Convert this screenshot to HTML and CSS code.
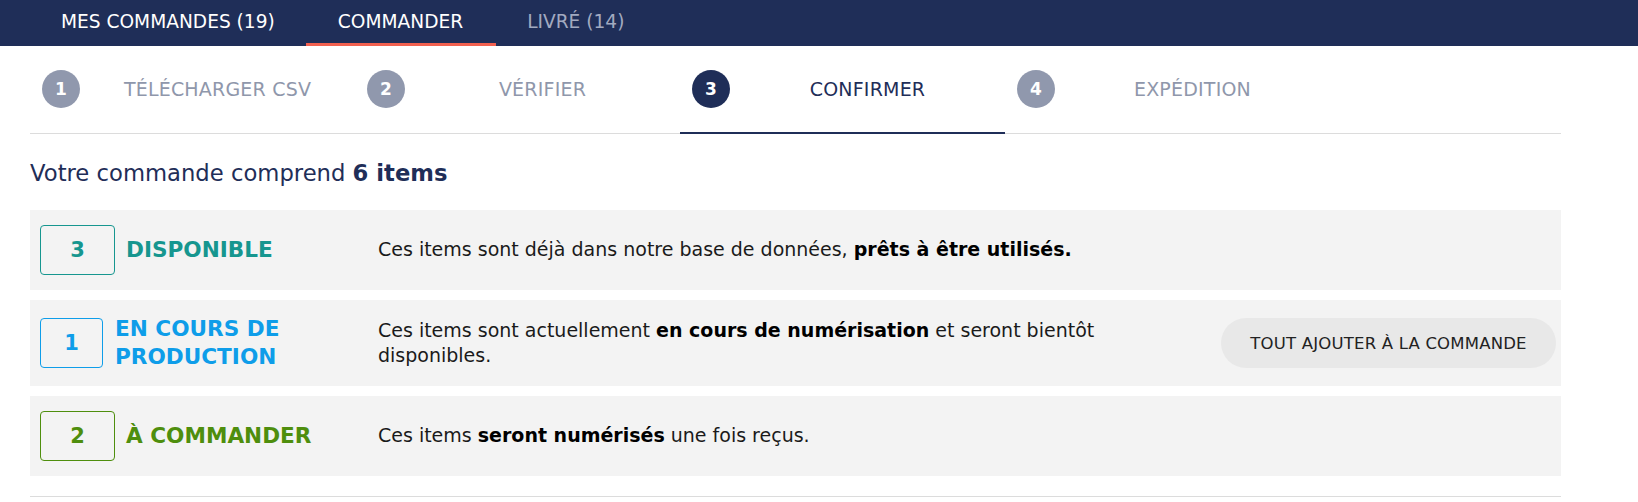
FILE: index.html
```html
<!DOCTYPE html>
<html lang="fr">
<head>
<meta charset="utf-8">
<title>Commander</title>
<link rel="stylesheet" href="styles.css">
</head>
<body>
<nav class="topnav">
  <a class="tab">MES COMMANDES (19)</a>
  <a class="tab tab--active">COMMANDER</a>
  <a class="tab tab--muted">LIVRÉ (14)</a>
</nav>
<main class="page">
  <ol class="stepper">
    <li class="step"><span class="step-num">1</span><span class="step-label">TÉLÉCHARGER CSV</span></li>
    <li class="step"><span class="step-num">2</span><span class="step-label">VÉRIFIER</span></li>
    <li class="step step--active"><span class="step-num">3</span><span class="step-label">CONFIRMER</span></li>
    <li class="step"><span class="step-num">4</span><span class="step-label">EXPÉDITION</span></li>
  </ol>
  <h2 class="summary">Votre commande comprend <strong>6 items</strong></h2>
  <section class="rows">
    <div class="row row--available">
      <div class="status">
        <span class="badge">3</span>
        <span class="status-label">DISPONIBLE</span>
      </div>
      <p class="desc">Ces items sont déjà dans notre base de données, <strong>prêts à être utilisés.</strong></p>
    </div>
    <div class="row row--production">
      <div class="status">
        <span class="badge badge--narrow">1</span>
        <span class="status-label status-label--wrap"><span>EN COURS DE</span> <span>PRODUCTION</span></span>
      </div>
      <p class="desc"><span>Ces items sont actuellement <strong>en cours de numérisation</strong> et seront bientôt</span><br><span>disponibles.</span></p>
      <button class="add-btn">TOUT AJOUTER À LA COMMANDE</button>
    </div>
    <div class="row row--order">
      <div class="status">
        <span class="badge">2</span>
        <span class="status-label">À COMMANDER</span>
      </div>
      <p class="desc">Ces items <strong>seront numérisés</strong> une fois reçus.</p>
    </div>
  </section>
  <div class="rule"></div>
</main>
</body>
</html>
```

FILE: styles.css
```css
* { box-sizing: border-box; }

body {
  margin: 0;
  font-family: "DejaVu Sans", "Noto Sans", sans-serif;
  color: #1a1a1a;
  background: #fff;
}

.topnav {
  display: flex;
  height: 46px;
  background: #1f2e58;
  padding-left: 30px;
}

.tab {
  display: block;
  padding: 0 31px;
  height: 46px;
  line-height: 43px;
  border-bottom: 3px solid transparent;
  color: #fff;
  font-size: 18.6px;
}

.tab--active {
  border-bottom-color: #f2604f;
  padding: 0 33px 0 32px;
}
.tab--muted { color: #a2aac0; }

.page {
  padding: 0 77px 0 30px;
}

.stepper {
  list-style: none;
  margin: 0;
  padding: 0;
  display: flex;
  border-bottom: 1px solid #dcdcdc;
}

.step {
  width: 325px;
  height: 88px;
  display: flex;
  align-items: center;
  padding-left: 12px;
  border-bottom: 2px solid transparent;
  margin-bottom: -1px;
  color: #8f97ab;
}

.step--active {
  border-bottom-color: #1f2e58;
  color: #1f2e58;
}

.step-num {
  width: 38px;
  height: 38px;
  border-radius: 50%;
  background: #9098ad;
  color: #fff;
  font-weight: bold;
  font-size: 17px;
  display: flex;
  align-items: center;
  justify-content: center;
  flex: none;
}

.step--active .step-num { background: #1f2e58; }

.step-label {
  flex: 1;
  text-align: center;
  font-size: 19px;
  letter-spacing: 0.2px;
}

.summary {
  margin: 25px 0 23px;
  font-size: 22.7px;
  line-height: 28px;
  font-weight: normal;
  color: #1f2e58;
}

.summary strong { font-weight: bold; }

.rows {
  display: flex;
  flex-direction: column;
  gap: 10px;
}

.row {
  display: flex;
  align-items: center;
  min-height: 80px;
  padding: 0 5px 0 10px;
  background: #f3f3f3;
}

.row--production { min-height: 86px; }

.status {
  width: 338px;
  flex: none;
  display: flex;
  align-items: center;
  gap: 11px;
}

.row--production .status { gap: 12px; }

.badge {
  width: 75px;
  height: 50px;
  flex: none;
  border: 1px solid currentColor;
  border-radius: 4px;
  display: flex;
  align-items: center;
  justify-content: center;
  font-weight: bold;
  font-size: 21px;
}

.badge--narrow { width: 63px; }

.status-label {
  font-weight: bold;
  font-size: 21.6px;
  line-height: 28px;
}

.status-label--wrap { max-width: 170px; }

.row--available .status { color: #16968f; }
.row--production .status { color: #0e9de9; }
.row--order .status { color: #4e8e0d; }

.desc {
  margin: 0;
  font-size: 19px;
  line-height: 25.5px;
  max-width: 760px;
  color: #1a1a1a;
}

.desc strong { color: #000; }

.add-btn {
  margin-left: auto;
  width: 335px;
  height: 50px;
  border: none;
  border-radius: 25px;
  background: #e8e8e8;
  color: #222;
  font-family: inherit;
  font-size: 16.5px;
  letter-spacing: 0.2px;
}

.rule {
  margin-top: 20px;
  border-top: 1px solid #dcdcdc;
}
```
